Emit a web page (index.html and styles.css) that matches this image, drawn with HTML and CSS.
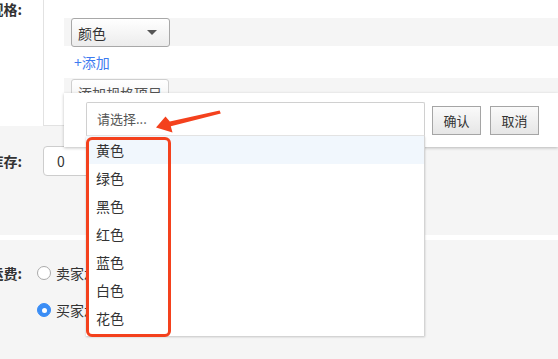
FILE: index.html
```html
<!DOCTYPE html>
<html lang="zh-CN">
<head>
    <meta charset="UTF-8">
    <meta name="viewport" content="width=device-width, initial-scale=1.0">
    <title>商品规格</title>
    <link rel="stylesheet" href="styles.css">
</head>
<body>
    <div class="form">
        <div class="section spec-section">
            <div class="form-row">
                <div class="form-label">规格:</div>
                <div class="spec-box">
                    <div class="spec-item">
                        <div class="select">颜色<span class="caret"></span></div>
                    </div>
                    <div class="add-link">+添加</div>
                    <div class="spec-footer">
                        <button class="btn-add">添加规格项目</button>
                    </div>
                </div>
            </div>
        </div>

        <div class="section stock-section">
            <div class="form-row stock-row">
                <div class="form-label">库存:</div>
                <div class="stock-input">0</div>
            </div>
        </div>

        <div class="divider"></div>

        <div class="section shipping-section">
            <div class="form-row radio-row">
                <div class="form-label">运费:</div>
                <span class="radio"></span>
                <span class="radio-text">卖家承担运费</span>
            </div>
            <div class="form-row radio-row">
                <div class="form-label"></div>
                <span class="radio checked"></span>
                <span class="radio-text">买家承担运费</span>
            </div>
        </div>
    </div>

    <!-- popup for adding a spec item -->
    <div class="popup">
        <div class="combo">
            <div class="combo-input">请选择...</div>
            <ul class="combo-list">
                <li class="active">黄色</li>
                <li>绿色</li>
                <li>黑色</li>
                <li>红色</li>
                <li>蓝色</li>
                <li>白色</li>
                <li>花色</li>
            </ul>
        </div>
        <button class="btn">确认</button>
        <button class="btn">取消</button>
    </div>

    <!-- annotation -->
    <div class="mark-box"></div>
    <svg class="mark-arrow" width="558" height="359" viewBox="0 0 558 359">
        <polygon points="156,127.5 172.5,132.5 170.8,126.2 220.8,113.4 219.6,110.4 169.8,121.6 165.5,116.5" fill="#f4411d"/>
    </svg>
</body>
</html>
```

FILE: styles.css
```css
body {
    margin: 0;
    background-color: #f5f5f5;
    font-family: "Noto Sans CJK SC", "Liberation Sans", sans-serif;
    color: #333;
    overflow: hidden;
    position: relative;
    height: 359px;
}

.form {
    margin-left: -58px;
}

.form-row {
    display: flex;
}

.form-label {
    width: 80px;
    flex-shrink: 0;
    padding-right: 21px;
    text-align: right;
    font-size: 14px;
    font-weight: bold;
    line-height: 16px;
    color: #333;
}

/* spec section */
.spec-section {
    background-color: #fff;
    margin-top: -12px;
}

.spec-section .form-label {
    padding-top: 13px;
}

.spec-box {
    flex: 1;
    height: 138px;
    box-sizing: border-box;
    border: 1px solid #e2e2e2;
    border-right: none;
    padding: 29px 0 0 20px;
}

.spec-item {
    height: 28px;
    background-color: #f5f5f5;
    padding-left: 7px;
}

.select {
    width: 99px;
    height: 29px;
    box-sizing: border-box;
    border: 1px solid #a8a8a8;
    border-radius: 3px;
    background: linear-gradient(#fff, #ececec);
    display: flex;
    align-items: center;
    justify-content: space-between;
    padding: 0 12px 0 6px;
    font-size: 14px;
}

.caret {
    width: 0;
    height: 0;
    border-left: 5px solid transparent;
    border-right: 5px solid transparent;
    border-top: 5px solid #555;
}

.add-link {
    margin: 8px 0 0 10px;
    color: #3d7bf0;
    font-size: 14px;
    line-height: 16px;
}

.spec-footer {
    margin-top: 8px;
    background-color: #f5f5f5;
    padding: 1px 7px 12px;
}

.btn-add {
    height: 28px;
    border: 1px solid #cfcfcf;
    border-radius: 3px;
    background: linear-gradient(#fff, #f0f0f0);
    color: #555;
    font-family: inherit;
    font-size: 14px;
    padding: 0 6px;
}

/* stock */
.stock-row {
    margin-top: 20px;
    align-items: center;
    height: 30px;
}

.stock-input {
    width: 160px;
    height: 30px;
    box-sizing: border-box;
    border: 1px solid #cdcdcd;
    border-radius: 4px;
    background-color: #fff;
    padding-left: 13px;
    font-size: 14px;
    line-height: 28px;
}

.stock-section {
    height: 89px;
}

.divider {
    height: 5px;
    background-color: #fff;
}

/* shipping */
.shipping-section {
    padding-top: 23px;
}

.radio-row {
    align-items: center;
    height: 20px;
    margin-bottom: 17px;
}

.radio-row .form-label {
    padding-right: 15px;
}

.radio {
    width: 14px;
    height: 14px;
    box-sizing: border-box;
    border: 1px solid #aaa;
    border-radius: 50%;
    background-color: #fff;
    display: flex;
    align-items: center;
    justify-content: center;
}

.radio.checked {
    background-color: #3a8df5;
    border-color: #3a8df5;
}

.radio.checked::after {
    content: "";
    width: 5px;
    height: 5px;
    border-radius: 50%;
    background-color: #fff;
}

.radio-text {
    margin-left: 5px;
    font-size: 14px;
    color: #333;
}

/* popup */
.popup {
    position: absolute;
    top: 93px;
    left: 64px;
    right: 0;
    height: 54px;
    background-color: #fff;
    box-shadow: 0 1px 3px rgba(0, 0, 0, 0.25);
    display: flex;
    align-items: flex-start;
    padding: 9px 0 0 22px;
    box-sizing: border-box;
}

.combo {
    position: relative;
    width: 339px;
}

.combo-input {
    height: 34px;
    box-sizing: border-box;
    border: 1px solid #d0d0d0;
    border-bottom-color: #e6e6e6;
    border-radius: 2px 2px 0 0;
    padding-left: 10px;
    font-size: 13px;
    line-height: 32px;
    color: #555;
}

.combo-list {
    position: absolute;
    top: 34px;
    left: 0;
    width: 339px;
    box-sizing: border-box;
    margin: 0;
    padding: 0 0 4px;
    list-style: none;
    background-color: #fff;
    border-right: 1px solid #d4d4d4;
    box-shadow: 0 1px 2px rgba(0, 0, 0, 0.2);
}

.combo-list li {
    height: 28px;
    line-height: 28px;
    padding-left: 10px;
    font-size: 14px;
    color: #333;
}

.combo-list li.active {
    background-color: #f1f7fd;
}

.btn {
    margin-top: 4px;
    margin-left: 7px;
    width: 49px;
    height: 29px;
    border: 1px solid #a5a5a5;
    background: linear-gradient(#fafafa, #e6e6e6);
    font-family: inherit;
    font-size: 13px;
    color: #333;
    padding: 0;
}

.btn + .btn {
    margin-left: 9px;
}

/* annotation overlay */
.mark-box {
    position: absolute;
    left: 86px;
    top: 137px;
    width: 85px;
    height: 200px;
    box-sizing: border-box;
    border: 3px solid #f4411d;
    border-radius: 6px;
}

.mark-arrow {
    position: absolute;
    left: 0;
    top: 0;
}
```
